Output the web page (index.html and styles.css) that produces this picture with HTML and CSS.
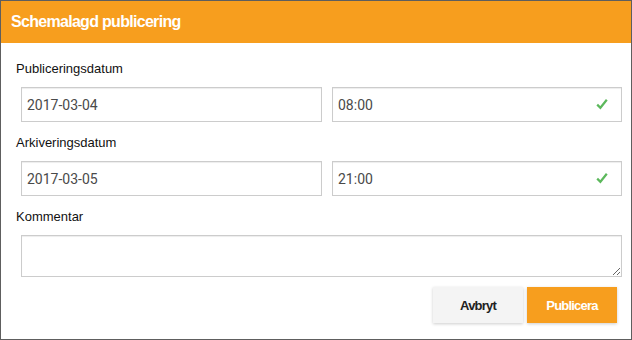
FILE: index.html
```html
<!DOCTYPE html>
<html lang="sv">

<head>
    <meta charset="UTF-8">
    <meta name="viewport" content="width=device-width, initial-scale=1.0">
    <title>Schemalagd publicering</title>
    <link rel="stylesheet" href="styles.css">
</head>

<body>
    <div class="modal">
        <div class="modal_header">
            <h1>Schemalagd publicering</h1>
        </div>
        <div class="modal_body">
            <label class="field_label">Publiceringsdatum</label>
            <div class="field_row">
                <input type="text" class="field_date" value="2017-03-04">
                <div class="field_time">
                    <input type="text" value="08:00">
                    <svg class="check" viewBox="0 0 12 12" width="12" height="12">
                        <path d="M1.2 6.6 L4.4 9.8 L10.8 1.8" fill="none" stroke="#5cb85c" stroke-width="2.2" />
                    </svg>
                </div>
            </div>

            <label class="field_label">Arkiveringsdatum</label>
            <div class="field_row">
                <input type="text" class="field_date" value="2017-03-05">
                <div class="field_time">
                    <input type="text" value="21:00">
                    <svg class="check" viewBox="0 0 12 12" width="12" height="12">
                        <path d="M1.2 6.6 L4.4 9.8 L10.8 1.8" fill="none" stroke="#5cb85c" stroke-width="2.2" />
                    </svg>
                </div>
            </div>

            <label class="field_label">Kommentar</label>
            <textarea class="comment"></textarea>

            <div class="actions">
                <button type="button" class="btn_cancel">Avbryt</button>
                <button type="button" class="btn_publish">Publicera</button>
            </div>
        </div>
    </div>
</body>

</html>
```

FILE: styles.css
```css
*,
::before,
::after {
    box-sizing: border-box;
}

body {
    margin: 0;
    width: 632px;
    height: 340px;
    padding: 1px;
    background-color: #5e5e5e;
    font-family: "Liberation Sans", Arial, sans-serif;
}

.modal {
    background-color: #fff;
    height: 338px;
}

.modal_header {
    background-color: #f79e1e;
    height: 42px;
    padding-left: 10px;
    display: flex;
    align-items: center;
}

.modal_header h1 {
    margin: 0;
    color: #fff;
    font-size: 16px;
    font-weight: bold;
    letter-spacing: -0.7px;
}

.modal_body {
    padding: 18px 9px 0 15px;
}

.field_label {
    display: block;
    font-size: 13px;
    line-height: 16px;
    color: #111;
    margin-bottom: 10px;
}

.field_row {
    display: flex;
    gap: 10px;
    margin-left: 5px;
    margin-bottom: 13px;
}

.field_row input {
    height: 35px;
    border: 1px solid #ccc;
    box-shadow: inset 0 1px 1px rgba(0, 0, 0, 0.075);
    padding: 0 5px;
    font-family: Roboto, sans-serif;
    font-size: 14px;
    color: #4a4a4a;
    outline: none;
}

.field_date {
    flex: 0 0 301px;
}

.field_time {
    flex: 1;
    position: relative;
    display: flex;
}

.field_time input {
    flex: 1;
    width: 100%;
}

.check {
    position: absolute;
    right: 14px;
    top: 11px;
}

.comment {
    display: block;
    margin-left: 5px;
    width: 601px;
    height: 42px;
    border: 1px solid #ccc;
    box-shadow: inset 0 1px 1px rgba(0, 0, 0, 0.075);
    resize: vertical;
    outline: none;
}

.actions {
    display: flex;
    justify-content: flex-end;
    gap: 4px;
    margin-top: 10px;
    padding-right: 5px;
}

.btn_cancel,
.btn_publish {
    width: 90px;
    height: 36px;
    border: none;
    font-family: "Liberation Sans", Arial, sans-serif;
    font-size: 13px;
    font-weight: bold;
    letter-spacing: -0.8px;
    box-shadow: 0 1px 3px rgba(0, 0, 0, 0.2);
}

.btn_cancel {
    background-color: #f4f4f4;
    color: #222;
}

.btn_publish {
    background-color: #f79e1e;
    color: #fff;
}
```
